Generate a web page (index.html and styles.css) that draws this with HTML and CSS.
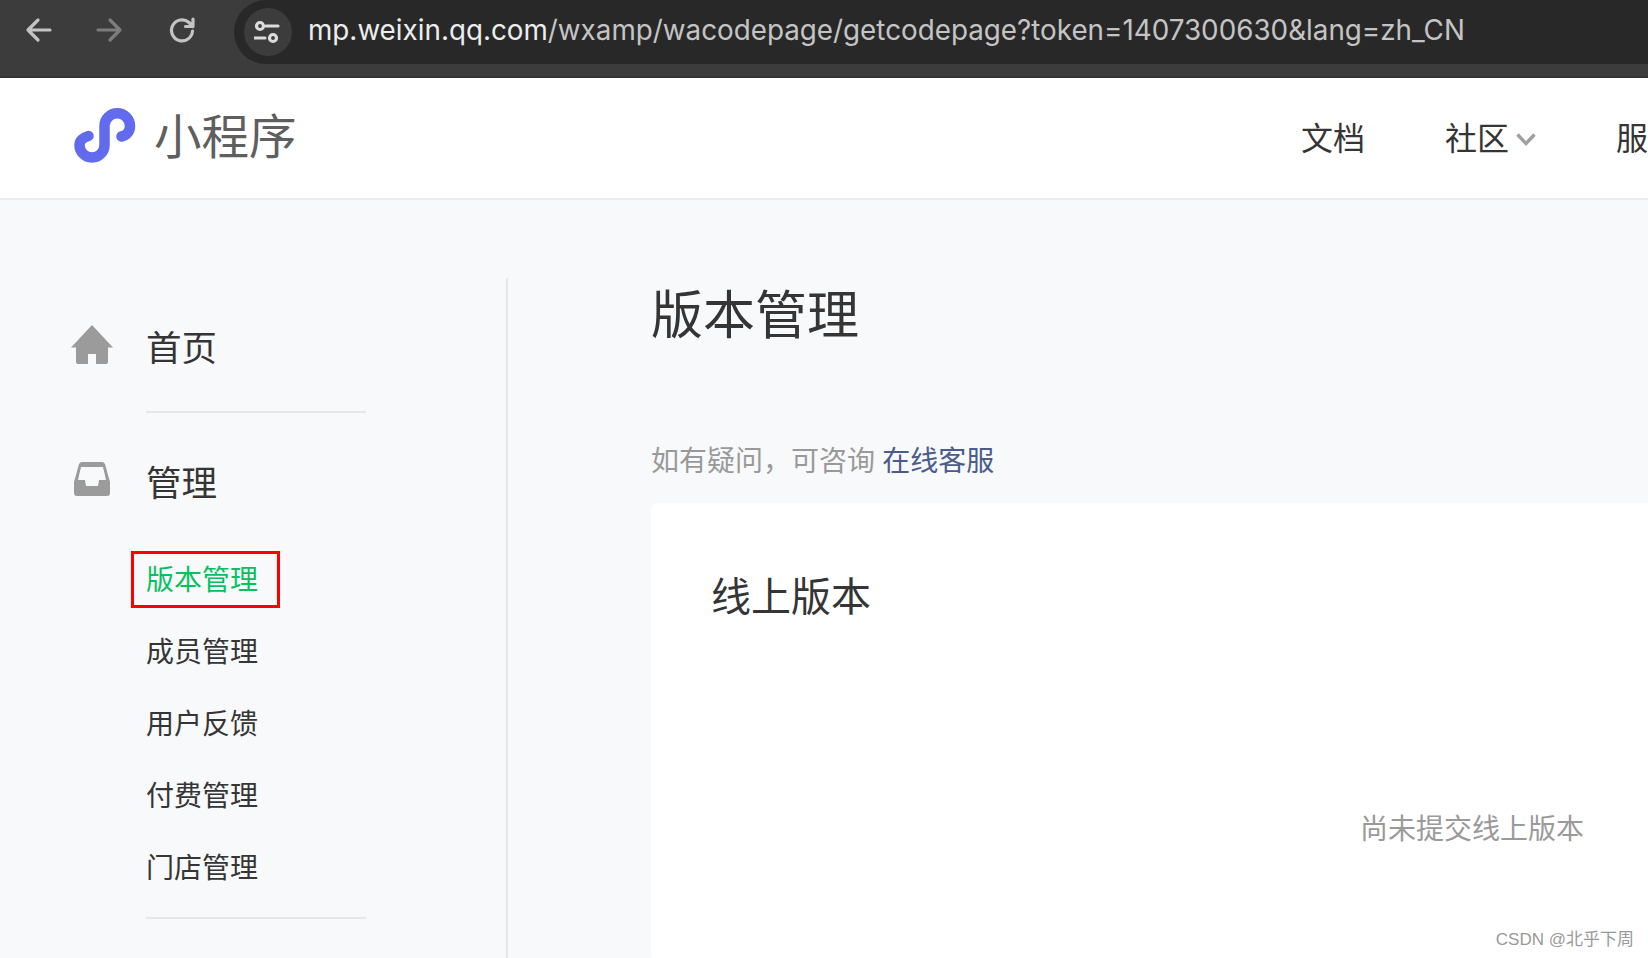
FILE: index.html
```html
<!DOCTYPE html>
<html lang="zh-CN">
<head>
<meta charset="utf-8">
<title>版本管理</title>
<link rel="stylesheet" href="styles.css">
</head>
<body>
<div class="toolbar">
  <div class="tool-buttons">
    <svg class="tool-icon" viewBox="0 0 24 24"><path class="stroke-back" d="M24 12H2M12 2 2 12l10 10"/></svg>
    <svg class="tool-icon" viewBox="0 0 24 24"><path class="stroke-forward" d="M0 12h22M12 2l10 10-10 10"/></svg>
    <svg class="tool-icon reload" viewBox="0 0 24 24"><path class="stroke-back" d="M22.500 13A10.500 10.500 0 1 1 19 4.500L23 8.500M23 1V8.500H15.500"/></svg>
  </div>
  <div class="address">
    <span class="tune">
      <svg class="tune-icon" viewBox="0 0 28 24"><g class="stroke-tune"><circle cx="6" cy="6" r="3.500"/><circle cx="19" cy="18" r="3.500"/><path d="M12 6h12M0 18h11"/></g></svg>
    </span>
    <span class="url"><span class="host">mp.weixin.qq.com</span>/wxamp/wacodepage/getcodepage?token=1407300630&amp;lang=zh_CN</span>
  </div>
</div>

<header class="site-header">
  <div class="brand">
    <svg class="logo" viewBox="0 0 62 56"><path d="M14.500 28C9 29.500 5.500 33 5.500 37A12.500 12.500 0 0 0 30.500 37V18A12.750 12.750 0 0 1 56 18C56 23.500 52.500 27.500 47.500 28.500"/></svg>
    <span class="brand-name">小程序</span>
  </div>
  <nav class="site-nav">
    <a class="nav-link">文档</a>
    <a class="nav-link nav-drop">社区<svg class="chevron" viewBox="0 0 20 13"><path d="M1.500 1.500 10 10.500l8.500-9"/></svg></a>
    <a class="nav-link">服务</a>
  </nav>
</header>

<div class="page">
  <aside class="sidebar">
    <div class="menu-head">
      <svg class="menu-icon home" viewBox="0 0 42 39"><path d="M21 0 42 22.500H37V37a2 2 0 0 1-2 2H25V29H17V39H7a2 2 0 0 1-2-2V22.500H0Z"/></svg>
      <span>首页</span>
    </div>
    <div class="menu-rule"></div>
    <div class="menu-head second">
      <svg class="menu-icon inbox" viewBox="0 0 36 34"><path fill-rule="evenodd" d="M8 0H28Q30 0 31 2L36 20V31Q36 34 33 34H3Q0 34 0 31V20L5 2Q6 0 8 0ZM7 5 4 18H11L12 24H24L25 18H32L29 5Z"/></svg>
      <span>管理</span>
    </div>
    <ul class="submenu">
      <li class="subitem active">版本管理<span class="mark"></span></li>
      <li class="subitem">成员管理</li>
      <li class="subitem">用户反馈</li>
      <li class="subitem">付费管理</li>
      <li class="subitem">门店管理</li>
    </ul>
    <div class="menu-rule lower"></div>
  </aside>
  <main class="content">
    <h1 class="title">版本管理</h1>
    <p class="hint">如有疑问，可咨询 <a class="hint-link">在线客服</a></p>
    <section class="card">
      <h2 class="card-title">线上版本</h2>
      <p class="empty">尚未提交线上版本</p>
    </section>
  </main>
</div>
<div class="watermark">CSDN @北乎下周</div>
</body>
</html>
```
FILE: styles.css
```css
* { box-sizing: border-box; }
html, body { margin: 0; height: 100%; }
body {
  width: 1648px;
  height: 958px;
  overflow: hidden;
  position: relative;
  background: #f8f9fb;
  color: #353535;
  font-family: "Noto Sans CJK SC", "Liberation Sans", sans-serif;
}

/* browser chrome */
.toolbar {
  height: 78px;
  display: flex;
  background: #3c3c3c;
  border-bottom: 2px solid #333;
  padding-left: 26px;
}
.tool-buttons { display: flex; gap: 48px; padding-top: 18px; width: 208px; }
.tool-icon { width: 24px; height: 24px; overflow: visible; }
.stroke-back, .stroke-forward { fill: none; stroke-width: 3.200; stroke-linecap: round; stroke-linejoin: round; }
.stroke-back { stroke: #c3c3c3; }
.stroke-forward { stroke: #7d7d7d; }
.address {
  flex: 1;
  height: 64px;
  display: flex;
  align-items: center;
  padding-left: 10px;
  background: #282828;
  border-radius: 32px 0 0 32px;
}
.tune {
  width: 48px;
  height: 48px;
  border-radius: 50%;
  background: #3c3c3c;
  display: flex;
  align-items: center;
  justify-content: center;
}
.tune-icon { width: 28px; height: 24px; }
.stroke-tune { fill: none; stroke: #dcdcdc; stroke-width: 3.200; stroke-linecap: round; }
.url {
  margin: -4px 0 0 16px;
  font-family: Inter, "Liberation Sans", sans-serif;
  font-size: 27.800px;
  color: #c4c4c4;
  white-space: nowrap;
}
.host { color: #ededed; }

/* site header */
.site-header {
  height: 122px;
  display: flex;
  justify-content: space-between;
  align-items: center;
  background: #fff;
  border-bottom: 2px solid #ececec;
  padding-left: 74px;
  overflow: hidden;
}
.brand { display: flex; align-items: center; gap: 18px; }
.logo { width: 62px; height: 56px; margin-top: -4px; overflow: visible; fill: none; stroke: #626bee; stroke-width: 10.500; stroke-linecap: round; }
.brand-name { font-size: 47.500px; line-height: 56px; margin-top: -8px; color: #5f5f5f; }
.site-nav { display: flex; gap: 80px; margin: -4px -32px 0 0; font-size: 32px; }
.nav-link { color: #353535; white-space: nowrap; display: flex; align-items: center; }
.nav-drop { margin-right: 20px; }
.chevron { width: 20px; height: 13px; margin-left: 7px; margin-top: 6px; margin-right: -20px; fill: none; stroke: #a0a0a0; stroke-width: 3.400; }

/* page */
.page { display: flex; height: 758px; padding-top: 78px; }
.sidebar {
  width: 508px;
  flex: none;
  border-right: 2px solid #e6e7ea;
  padding-left: 71px;
}
.menu-head {
  display: flex;
  align-items: center;
  height: 72px;
  margin-top: 31px;
  font-size: 35.500px;
  color: #353535;
}
.menu-head.second { margin-top: 31px; }
.menu-icon { flex: none; fill: #9b9b9b; }
.home { width: 42px; height: 39px; margin-right: 33px; margin-top: -2px; }
.inbox { width: 36px; height: 34px; margin: -3px 36px 0 3px; }
.menu-rule { width: 220px; height: 2px; margin: 30px 0 0 75px; background: #e6e7ea; }
.menu-rule.lower { margin-top: 15px; }
.submenu { list-style: none; margin: 26px 0 0 75px; padding: 0; }
.subitem { position: relative; height: 72px; line-height: 72px; font-size: 28px; color: #353535; }
.active { color: #07c160; }
.mark {
  position: absolute;
  left: -15px;
  top: 9px;
  width: 149px;
  height: 57px;
  border: 3px solid #f00;
}

.content { flex: 1; padding-left: 143px; min-width: 0; }
.title { margin: -2px 0 0; font-size: 52px; line-height: 72px; font-weight: 400; color: #353535; }
.hint { margin: 91px 0 0; font-size: 28px; line-height: 40px; color: #999; }
.hint-link { margin-left: 1px; color: #4a5c8c; }
.card {
  height: 460px;
  width: 1100px;
  margin-top: 24px;
  padding: 63px 0 0 60px;
  background: #fff;
  border-radius: 8px;
}
.card-title { margin: 0; font-size: 40px; line-height: 56px; font-weight: 400; color: #353535; }
.empty { margin: 185px 0 0 649px; font-size: 28px; line-height: 40px; color: #9a9a9a; white-space: nowrap; }

.watermark {
  position: absolute;
  right: 14px;
  bottom: 6px;
  font-family: "Liberation Sans", "Noto Sans CJK SC", sans-serif;
  font-size: 17px;
  line-height: 24px;
  color: #999;
}
```
